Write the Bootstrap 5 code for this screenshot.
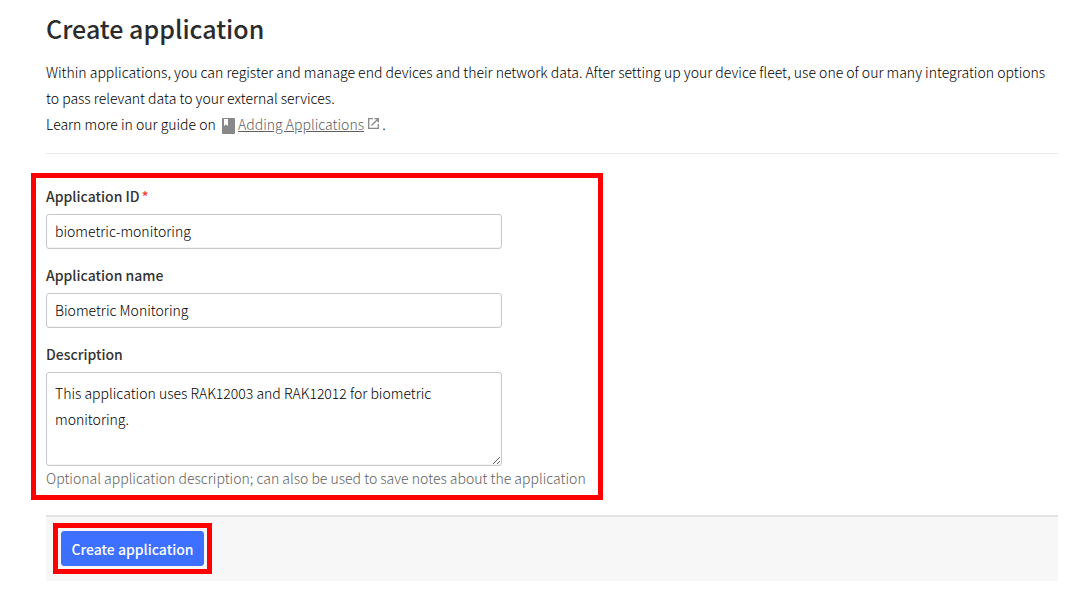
<!DOCTYPE html>
<html lang="en">
<head>
<meta charset="utf-8">
<meta name="viewport" content="width=device-width, initial-scale=1">
<title>Create application</title>
<link href="https://cdn.jsdelivr.net/npm/bootstrap@5.3.0/dist/css/bootstrap.min.css" rel="stylesheet">
<style>
  body { font-family: "Source Sans Pro", "Noto Sans CJK SC", sans-serif; font-size: 14px; font-weight: 300; line-height: 26px; color: #000; background: #fff; }
  .page { padding: 10px 13px 13px 46px; }
  h1 { font-size: 25px; line-height: 36px; font-weight: 500; color: #2b2b2b; margin-bottom: 13px; }
  .intro { padding-bottom: 16px; border-bottom: 1px solid #ebebeb; margin-bottom: 19px; }
  .guide-icon { margin-left: 3px; }
  .guide-link, .guide-link:hover { color: #606060; }
  .highlight { border: 5px solid #f00; }
  .fields { width: 572px; max-width: 100%; margin-left: -15px; padding: 5px 0 5px 10px; }
  .form-label { display: block; font-weight: 500; line-height: 26px; margin-bottom: 5px; color: #333; }
  .required { color: #f33; margin-left: 2px; }
  .form-control { max-width: 456px; font-size: 14px; font-weight: 300; line-height: 26px; color: #000; border: 1px solid #c8c8c8; border-radius: 3px; padding: 0 8px 2px; box-shadow: inset 0 -1px 1px #0000000d; }
  input.form-control { height: 35px; margin-bottom: 13px; }
  textarea.form-control { display: block; height: 94px; min-height: 94px; padding-top: 7px; }
  .form-text { color: #606060; font-size: 14px; line-height: 24px; margin: 0; }
  .submit-bar { margin-top: 15px; border-top: 2px solid #e3e3e3; background: #f7f7f7; padding: 6px 7px 7px; }
  .submit-frame { padding: 3px; }
  .btn-create { --bs-btn-bg: #3d70ff; --bs-btn-border-color: #3d70ff; --bs-btn-color: #fff; --bs-btn-hover-bg: #2f60e8; --bs-btn-hover-color: #fff; height: 35px; width: 143px; padding: 0; font-size: 14px; line-height: 26px; font-weight: 500; border-radius: 3px; }
</style>
</head>
<body>
<main class="page">
  <h1>Create application</h1>
  <div class="intro">
    <p class="m-0">Within applications, you can register and manage end devices and their network data. After setting up your device fleet, use one of our many integration options to pass relevant data to your external services.</p>
    <p class="m-0">Learn more in our guide on
      <svg class="guide-icon" width="13" height="16" viewBox="0 0 13 16" aria-hidden="true"><path fill="#888" fill-rule="evenodd" d="M1 0H12Q13 0 13 1V15Q13 16 12 16H1Q0 16 0 15V1Q0 0 1 0ZM2 1V8L4 6.500L6 8V1Z"/></svg>
      <a class="guide-link" href="#">Adding Applications</a><svg class="ms-1 align-baseline" width="11" height="12" viewBox="0 0 11 12" fill="none" stroke="#888" stroke-width="1.300" aria-hidden="true"><path d="M5 .7H.7V10.300H10.300V6M6.500 .7H10.300V4.500M10.300 .7L3.500 7.500"/></svg> .</p>
  </div>
  <form>
    <div class="fields highlight">
      <label class="form-label" for="app-id">Application ID<span class="required">*</span></label>
      <input class="form-control" id="app-id" type="text" value="biometric-monitoring" required>
      <label class="form-label" for="app-name">Application name</label>
      <input class="form-control" id="app-name" type="text" value="Biometric Monitoring">
      <label class="form-label" for="app-desc">Description</label>
      <textarea class="form-control" id="app-desc" aria-describedby="desc-help" spellcheck="false">This application uses RAK12003 and RAK12012 for biometric monitoring.</textarea>
      <p class="form-text" id="desc-help">Optional application description; can also be used to save notes about the application</p>
    </div>
    <div class="submit-bar d-flex">
      <div class="submit-frame highlight d-flex">
        <button class="btn btn-create" type="submit">Create application</button>
      </div>
    </div>
  </form>
</main>
<script src="https://cdn.jsdelivr.net/npm/bootstrap@5.3.0/dist/js/bootstrap.bundle.min.js"></script>
</body>
</html>
